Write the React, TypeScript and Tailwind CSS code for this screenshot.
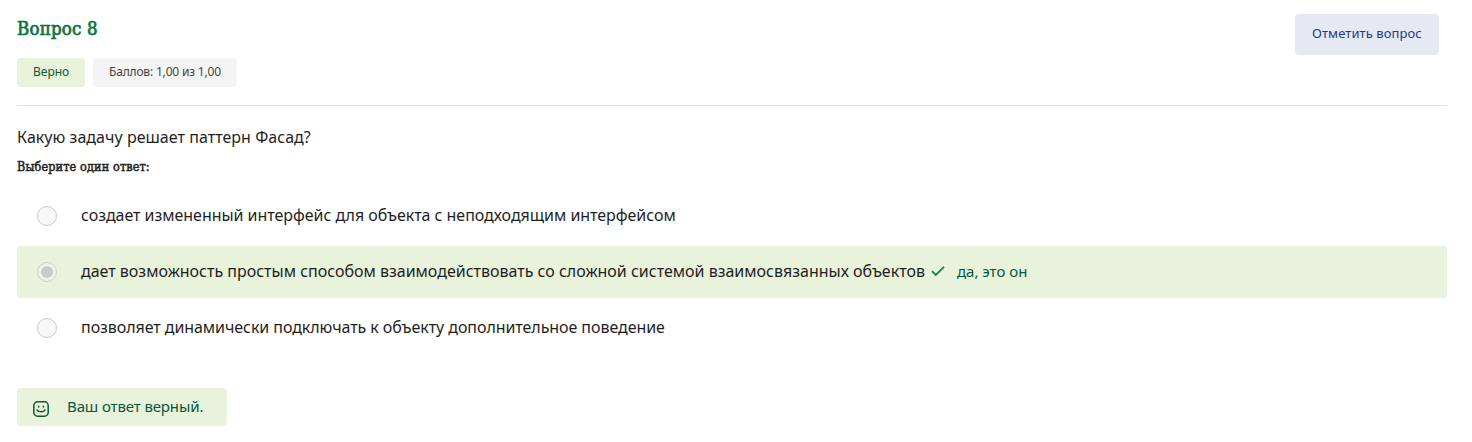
const answers = [
  {
    text: 'создает измененный интерфейс для объекта с неподходящим интерфейсом',
    spacing: 'tracking-[-0.035px]',
    correct: false,
  },
  {
    text: 'дает возможность простым способом взаимодействовать со сложной системой взаимосвязанных объектов',
    spacing: 'tracking-[-0.003px]',
    correct: true,
    note: 'да, это он',
  },
  {
    text: 'позволяет динамически подключать к объекту дополнительное поведение',
    spacing: 'tracking-[-0.065px]',
    correct: false,
  },
];

function Radio({ checked }: { checked: boolean }) {
  return (
    <span className={`flex size-5 shrink-0 items-center justify-center rounded-full border border-[#cacaca] ${checked ? 'bg-[#f0f3ec]' : 'bg-[#f8f8f8]'}`}>
      {checked && <span className="size-3 rounded-full bg-[#c9cbc9]" />}
    </span>
  );
}

function CheckIcon() {
  return (
    <svg className="h-3 w-[14px] shrink-0" viewBox="0 0 14 12" fill="none" stroke="#108548" strokeWidth="1.9">
      <path d="M1 5.2 4.8 9 13 0.9" />
    </svg>
  );
}

function SmileIcon() {
  return (
    <svg className="size-4 shrink-0" viewBox="0 0 16 16" fill="none" stroke="#055a3c" strokeWidth="1.5" strokeLinecap="round">
      <rect x="0.8" y="0.8" width="14.4" height="14.4" rx="3.8" />
      <path d="M5.6 5.2v.7M10.4 5.2v.7M4 8.8c1.5 2.7 6.5 2.7 8 0" />
    </svg>
  );
}

export default function App() {
  return (
    <main className="h-[442px] w-[1472px] overflow-hidden bg-white pl-[17px] pr-[25px] font-['Noto_Sans',sans-serif] text-[#1f1f1f]">
      <header className="flex h-[106px] items-start justify-between border-b border-[#dedede] pr-2 pt-[14px]">
        <div>
          <h1 className="h-[44px] whitespace-nowrap font-['DejaVu_Serif_Condensed','DejaVu_Serif',serif] text-[18.5px] font-normal leading-[29px] tracking-[0.2px] text-[#087443] [-webkit-text-stroke:0.7px_#087443]">
            Вопрос 8
          </h1>
          <div className="flex gap-2 whitespace-nowrap text-[12px] leading-[28px]">
            <span className="h-[29px] w-[68px] rounded bg-[#e9f3dc] pl-4 text-[#07573b]">Верно</span>
            <span className="h-[29px] w-[144px] rounded bg-[#f4f4f4] pl-4 tracking-[-0.18px] text-[#444]">
              Баллов: 1,00 из 1,00
            </span>
          </div>
        </div>
        <button className="flex h-[41px] w-[144px] whitespace-nowrap rounded bg-[#e5e9f4] pl-[17px] text-left text-[13px] leading-[38px] tracking-[0.08px] text-[#203b8c]">
          Отметить вопрос
        </button>
      </header>

      <p className="mt-[19px] h-6 whitespace-nowrap text-[16px] leading-6 tracking-[0.04px]">
        Какую задачу решает паттерн Фасад?
      </p>
      <p className="mt-2 h-5 whitespace-nowrap font-['DejaVu_Serif_Condensed','DejaVu_Serif',serif] text-[12.5px] font-normal leading-5 tracking-[0.14px] [-webkit-text-stroke:0.5px_#1f1f1f]">
        Выберите один ответ:
      </p>

      <ul className="mt-[13px] flex flex-col gap-1">
        {answers.map((a) => (
          <li
            key={a.text}
            className={`flex h-[52px] items-center rounded pl-5 ${a.correct ? 'bg-[#e9f3dc]' : ''}`}
          >
            <Radio checked={a.correct} />
            <span className={`mb-0.5 ml-6 whitespace-nowrap text-[16px] leading-6 ${a.spacing}`}>{a.text}</span>
            {a.note && (
              <>
                <span className="ml-1.5 flex"><CheckIcon /></span>
                <span className="mb-0.5 ml-3 whitespace-nowrap text-[15px] leading-6 text-[#07573b]">{a.note}</span>
              </>
            )}
          </li>
        ))}
      </ul>

      <div className="mt-[34px] flex h-[38px] w-[210px] items-center rounded bg-[#e9f3dc] pl-4 text-[#07573b]">
        <span className="mt-1"><SmileIcon /></span>
        <span className="mb-0.5 ml-[18px] whitespace-nowrap text-[15px] leading-6 tracking-[-0.12px]">
          Ваш ответ верный.
        </span>
      </div>
    </main>
  );
}
